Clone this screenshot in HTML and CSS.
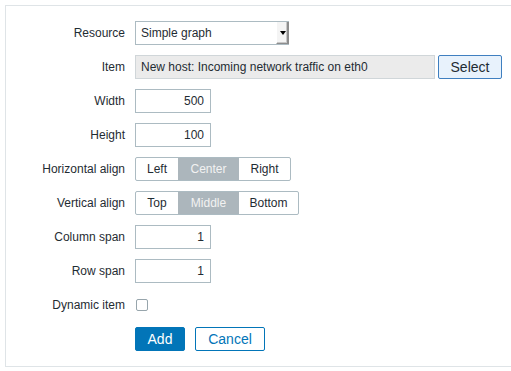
FILE: index.html
```html
<!DOCTYPE html>
<html lang="en">
<head>
    <meta charset="UTF-8">
    <title>Map element</title>
    <link rel="stylesheet" href="styles.css">
</head>
<body>
    <div class="frame">
        <div class="form-grid">
            <label class="form-label">Resource</label>
            <div class="field">
                <div class="select-box">
                    <span class="select-text">Simple graph</span>
                    <span class="select-arrow"><span class="arrow-tri"></span></span>
                </div>
            </div>

            <label class="form-label">Item</label>
            <div class="field">
                <div class="text-input readonly item-input">New host: Incoming network traffic on eth0</div>
                <button class="btn-alt">Select</button>
            </div>

            <label class="form-label">Width</label>
            <div class="field"><div class="text-input num-input">500</div></div>

            <label class="form-label">Height</label>
            <div class="field"><div class="text-input num-input">100</div></div>

            <label class="form-label">Horizontal align</label>
            <div class="field">
                <div class="radio-list">
                    <span class="radio-seg seg-left">Left</span>
                    <span class="radio-seg seg-center checked">Center</span>
                    <span class="radio-seg seg-right">Right</span>
                </div>
            </div>

            <label class="form-label">Vertical align</label>
            <div class="field">
                <div class="radio-list">
                    <span class="radio-seg seg-top">Top</span>
                    <span class="radio-seg seg-middle checked">Middle</span>
                    <span class="radio-seg seg-bottom">Bottom</span>
                </div>
            </div>

            <label class="form-label">Column span</label>
            <div class="field"><div class="text-input num-input">1</div></div>

            <label class="form-label">Row span</label>
            <div class="field"><div class="text-input num-input">1</div></div>

            <label class="form-label">Dynamic item</label>
            <div class="field"><span class="checkbox"></span></div>

            <span class="form-label"></span>
            <div class="field buttons">
                <button class="btn-main">Add</button>
                <button class="btn-outline">Cancel</button>
            </div>
        </div>
    </div>
</body>
</html>
```

FILE: styles.css
```css
* {
    margin: 0;
    padding: 0;
    box-sizing: border-box;
}

body {
    background: #fff;
    font-family: "Liberation Sans", Arial, sans-serif;
    font-size: 12px;
    color: #1f2c33;
    overflow: hidden;
}

/* Outer form frame, open on the right */
.frame {
    margin: 5px 0 0 5px;
    height: 362px;
    border: 1px solid #dfe4e7;
    border-right: none;
    padding: 15px 0 0 0;
}

.form-grid {
    display: grid;
    grid-template-columns: 119px 1fr;
    grid-auto-rows: 24px;
    column-gap: 10px;
    row-gap: 10px;
}

.form-label {
    display: flex;
    align-items: center;
    justify-content: flex-end;
    white-space: nowrap;
}

.field {
    display: flex;
    align-items: center;
    gap: 3px;
}

/* Select */
.select-box {
    display: flex;
    width: 154px;
    height: 24px;
    border: 1px solid #acbbc2;
    border-right: none;
    background: #fff;
}

.select-text {
    flex: 1;
    padding-left: 5px;
    line-height: 22px;
}

.select-arrow {
    width: 13px;
    height: 22px;
    background: #f4f4f4;
    border-left: 1px solid #fff;
    border-right: 2px solid #8d8d8d;
    border-bottom: 1px solid #8d8d8d;
    box-shadow: inset -1px -1px 0 #c8c8c8;
    display: flex;
    align-items: center;
    justify-content: center;
}

.arrow-tri {
    width: 0;
    height: 0;
    border-left: 3px solid transparent;
    border-right: 3px solid transparent;
    border-top: 4px solid #000;
    margin-left: 1px;
}

/* Text inputs */
.text-input {
    height: 24px;
    border: 1px solid #acbbc2;
    background: #fff;
    line-height: 22px;
    padding: 0 5px;
    white-space: nowrap;
}

.readonly {
    background: #ebebeb;
    border-color: #d0d6d9;
}

.item-input {
    width: 300px;
}

.num-input {
    width: 76px;
    text-align: right;
    padding-right: 6px;
}

/* Segmented radio buttons */
.radio-list {
    display: flex;
    height: 24px;
    border: 1px solid #acbbc2;
    border-radius: 2px;
}

.radio-seg {
    text-align: center;
    line-height: 22px;
    color: #1f2c33;
}

.radio-seg.checked {
    background: #acb6bc;
    color: #f2f2f2;
}

.seg-left, .seg-top { width: 42px; }
.seg-center, .seg-middle { width: 61px; }
.seg-right { width: 51px; }
.seg-bottom { width: 59px; }

/* Checkbox */
.checkbox {
    width: 12px;
    height: 12px;
    margin-left: 1px;
    border: 1px solid #97a5ac;
    border-radius: 2px;
    background: #fff;
}

/* Buttons */
button {
    font-family: "Liberation Sans", Arial, sans-serif;
    font-size: 14px;
    height: 24px;
    border-radius: 2px;
    cursor: pointer;
}

.btn-alt {
    width: 64px;
    background: #e8f2fc;
    border: 1px solid #3f7fc0;
    color: #1f2c33;
}

.buttons {
    gap: 10px;
}

.btn-main {
    width: 50px;
    background: #0275b8;
    border: 1px solid #0275b8;
    color: #fff;
}

.btn-outline {
    width: 70px;
    background: #fff;
    border: 1px solid #0275b8;
    color: #0275b8;
}
```
